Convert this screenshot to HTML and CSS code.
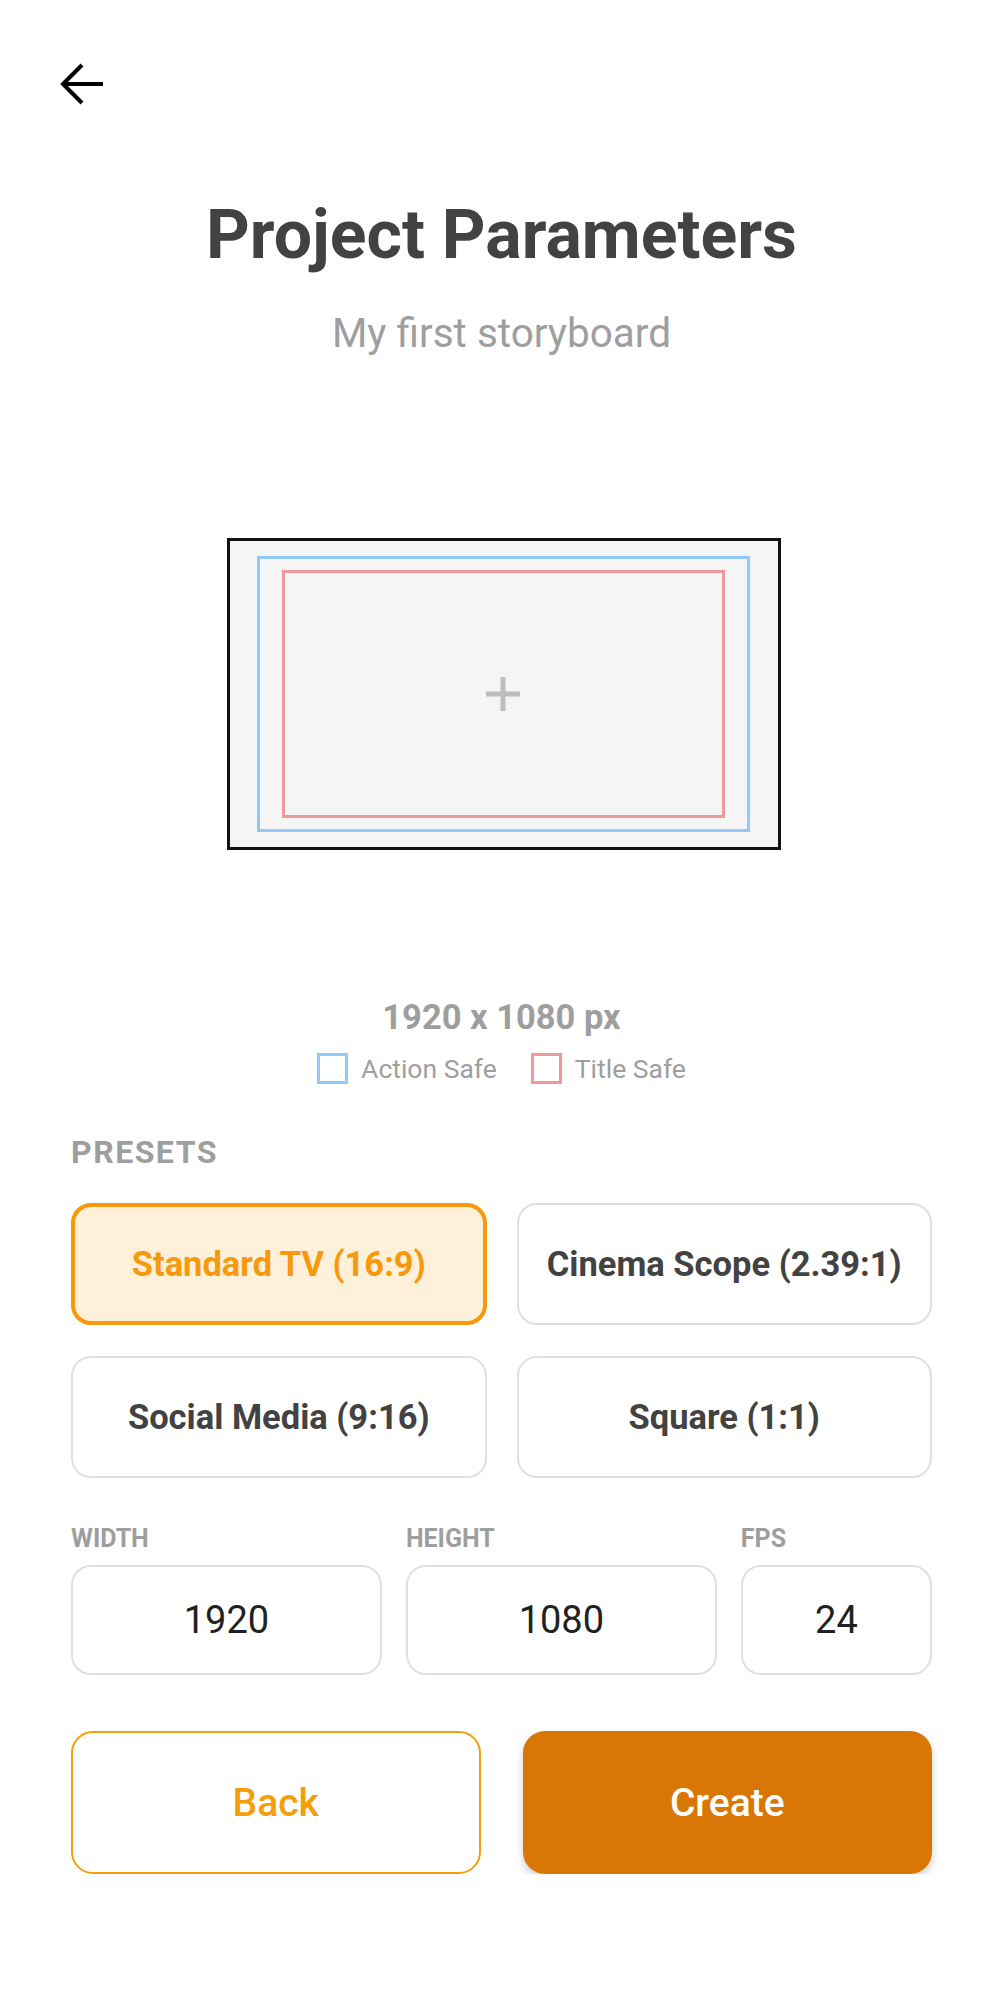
FILE: index.html
```html
<!DOCTYPE html>
<html lang="en">
<head>
  <meta charset="UTF-8" />
  <meta name="viewport" content="width=device-width, initial-scale=1.0"/>
  <title>Project Parameters</title>
  <link rel="stylesheet" href="styles.css">
</head>
<body>
  <div class="screen">
    <div class="topbar">
      <button class="icon-btn" aria-label="Back">
        <svg class="back-icon" viewBox="0 0 44 44" fill="none" stroke="#000" stroke-width="4">
          <path d="M43 22H4"/>
          <path d="M22 3L3 22l19 19"/>
        </svg>
      </button>
    </div>

    <h1 class="title">Project Parameters</h1>
    <p class="subtitle">My first storyboard</p>

    <div class="preview">
      <div class="frame">
        <div class="action-safe">
          <div class="title-safe">
            <svg class="plus" viewBox="0 0 34 34" stroke="#bdbdbd" stroke-width="5">
              <path d="M17 0v34M0 17h34"/>
            </svg>
          </div>
        </div>
      </div>
    </div>

    <div class="dims">1920 x 1080 px</div>
    <div class="legend">
      <div class="legend-item"><span class="swatch swatch-action"></span>Action Safe</div>
      <div class="legend-item"><span class="swatch swatch-title"></span>Title Safe</div>
    </div>

    <div class="section-label">PRESETS</div>
    <div class="presets">
      <button class="preset active">Standard TV (16:9)</button>
      <button class="preset">Cinema Scope (2.39:1)</button>
      <button class="preset">Social Media (9:16)</button>
      <button class="preset">Square (1:1)</button>
    </div>

    <div class="fields">
      <div class="field">
        <label for="width">WIDTH</label>
        <input type="text" id="width" value="1920">
      </div>
      <div class="field">
        <label for="height">HEIGHT</label>
        <input type="text" id="height" value="1080">
      </div>
      <div class="field">
        <label for="fps">FPS</label>
        <input type="text" id="fps" value="24">
      </div>
    </div>

    <div class="actions">
      <button class="btn btn-outline">Back</button>
      <button class="btn btn-primary">Create</button>
    </div>
  </div>
</body>
</html>
```

FILE: styles.css
```css
body {
  margin: 0;
  font-family: Roboto, "Noto Sans", sans-serif;
  background: #fff;
  color: #424242;
}
button, input {
  font-family: inherit;
}
.screen {
  padding: 0 68px 0 71px;
}
.topbar {
  padding-top: 62px;
  margin-left: -11px;
}
.icon-btn {
  display: block;
  padding: 0;
  border: none;
  background: none;
  cursor: pointer;
}
.back-icon {
  display: block;
  width: 44px;
  height: 44px;
}
.title {
  margin: 90px 0 0;
  font-size: 68px;
  line-height: 78px;
  font-weight: 700;
  text-align: center;
  color: #424242;
}
.subtitle {
  margin: 36px 0 0;
  font-size: 40.5px;
  line-height: 46px;
  text-align: center;
  color: #9e9e9e;
}

/* canvas preview with safe areas */
.preview {
  display: flex;
  justify-content: center;
  margin-top: 182px;
  padding-left: 4px;
}
.frame {
  width: 554px;
  height: 312px;
  box-sizing: border-box;
  border: 3px solid #111;
  background: #f5f5f5;
  display: flex;
  align-items: center;
  justify-content: center;
}
.action-safe {
  width: 90%;
  height: 90%;
  box-sizing: border-box;
  border: 3px solid #90caf9;
  display: flex;
  align-items: center;
  justify-content: center;
}
.title-safe {
  width: 91%;
  height: 92%;
  box-sizing: border-box;
  border: 3px solid #ef9a9a;
  display: flex;
  align-items: center;
  justify-content: center;
}
.plus {
  width: 34px;
  height: 34px;
}
.dims {
  margin-top: 147px;
  font-size: 34.5px;
  line-height: 40px;
  font-weight: 700;
  text-align: center;
  color: #9e9e9e;
}
.legend {
  margin-top: 16px;
  display: flex;
  justify-content: center;
  gap: 34px;
}
.legend-item {
  display: flex;
  align-items: center;
  gap: 13px;
  font-size: 26.5px;
  line-height: 31px;
  color: #9e9e9e;
}
.swatch {
  width: 31px;
  height: 31px;
  box-sizing: border-box;
  border: 3px solid;
}
.swatch-action { border-color: #90caf9; }
.swatch-title { border-color: #ef9a9a; }

/* presets */
.section-label {
  margin-top: 49px;
  font-size: 32px;
  line-height: 38px;
  font-weight: 700;
  letter-spacing: 1.5px;
  color: #9e9e9e;
}
.presets {
  margin-top: 32px;
  display: grid;
  grid-template-columns: 1fr 1fr;
  gap: 31px 30px;
}
.preset {
  height: 122px;
  box-sizing: border-box;
  border: 2.5px solid #e0e0e0;
  border-radius: 20px;
  background: #fff;
  color: #424242;
  font-size: 34.5px;
  font-weight: 700;
  cursor: pointer;
}
.preset.active {
  border: 4px solid #f7990c;
  background: #fff0da;
  color: #f7990c;
}

/* size fields */
.fields {
  margin-top: 46px;
  display: grid;
  grid-template-columns: 1fr 1fr 0.615fr;
  gap: 24px;
}
.field label {
  display: block;
  font-size: 25px;
  line-height: 30px;
  font-weight: 700;
  color: #9e9e9e;
}
.field input {
  display: block;
  margin-top: 11px;
  width: 100%;
  height: 110px;
  box-sizing: border-box;
  border: 2.5px solid #e0e0e0;
  border-radius: 20px;
  text-align: center;
  font-size: 38px;
  color: #212121;
  background: #fff;
}

.actions {
  margin-top: 56px;
  display: grid;
  grid-template-columns: 1fr 1fr;
  gap: 42px;
}
.btn {
  height: 143px;
  border-radius: 22px;
  font-size: 39px;
  font-weight: 500;
  cursor: pointer;
}
.btn-outline {
  background: #fff;
  border: 2.5px solid #f59e0b;
  color: #f59e0b;
}
.btn-primary {
  background: #d97706;
  border: none;
  color: #fff;
  box-shadow: 0 4px 8px rgba(0, 0, 0, 0.2);
}
```
